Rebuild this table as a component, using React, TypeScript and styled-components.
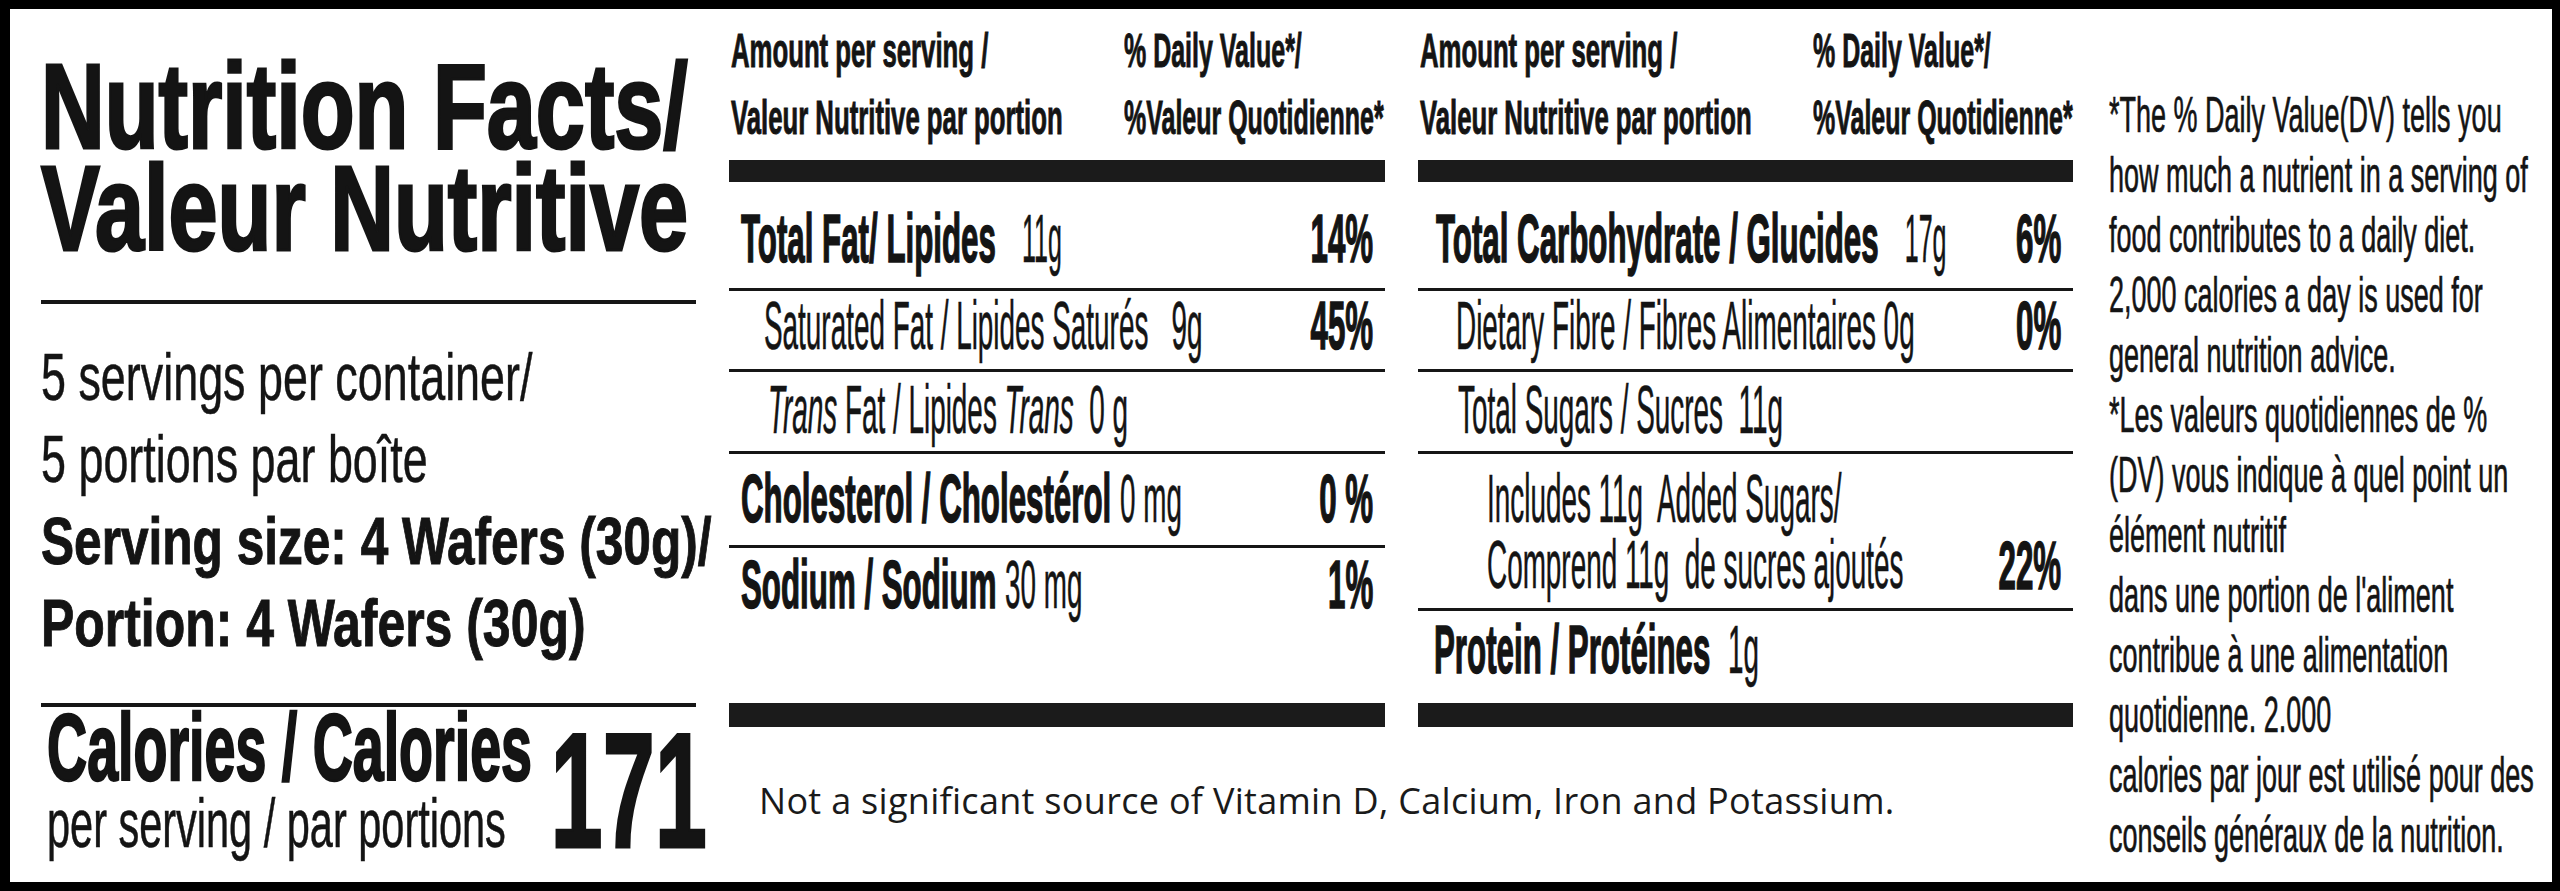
import React from "react";
import styled, { createGlobalStyle } from "styled-components";

const Global = createGlobalStyle`
  html, body { margin: 0; padding: 0; background: #fff; overflow: hidden; }
  #root { width: 2560px; height: 891px; }
`;

const Card = styled.div`
  box-sizing: border-box;
  width: 2560px;
  height: 891px;
  border-style: solid;
  border-color: #000;
  border-width: 9px 8px 9px 10px;
  background: #fff;
  display: flex;
  align-items: stretch;
  padding-left: 31px;
  overflow: hidden;
  color: #141414;
  font-family: "Liberation Sans", Arial, sans-serif;
`;

/* condensed text: glyphs squeezed horizontally */
const Sq = styled.span<{ $k: number; $right?: boolean; $w?: number }>`
  display: block;
  width: max-content;
  white-space: nowrap;
  transform: scaleX(${(p) => p.$k});
  transform-origin: ${(p) => (p.$right ? "right" : "left")} center;
  -webkit-text-stroke: ${(p) => p.$w ?? 0}px currentColor;
`;

const Amt = styled.span<{ $k?: number }>`
  display: inline-block;
  font-weight: 400;
  -webkit-text-stroke: 0.6px currentColor;
  transform: scaleX(${(p) => p.$k ?? 0.89});
  transform-origin: left center;
`;

/* ---------- left column ---------- */
const LeftCol = styled.div`
  flex: none;
  width: 664px;
  display: flex;
  flex-direction: column;
  padding-top: 46px;
`;

const Title = styled.h1`
  margin: 0;
  font-size: 120px;
  line-height: 102px;
  font-weight: 700;
`;

const TitleLine = styled.div`
  height: 102px;
`;

const Rule = styled.div<{ $mt: number }>`
  width: 655px;
  height: 4px;
  background: #161616;
  margin-top: ${(p) => p.$mt}px;
`;

const Info = styled.div`
  margin-top: 32px;
`;

const InfoLine = styled.div<{ $bold?: boolean }>`
  height: 82px;
  font-size: ${(p) => (p.$bold ? 67 : 66)}px;
  line-height: 82px;
  font-weight: ${(p) => (p.$bold ? 700 : 400)};
`;

const CalRow = styled.div`
  display: flex;
  align-items: flex-start;
  margin-top: -1px;
`;

const CalLabel = styled.div`
  flex: 1;
  min-width: 0;
  padding-left: 6px;
  display: flex;
  flex-direction: column;
`;

const CalTitle = styled.div`
  font-size: 95px;
  line-height: 82px;
  font-weight: 700;
`;

const CalSub = styled.div`
  font-size: 68px;
  line-height: 60px;
  margin-top: 5px;
`;

const CalNum = styled.div`
  flex: none;
  font-size: 163px;
  line-height: 163px;
  font-weight: 700;
  margin: 3px -2px 0 0;
`;

/* ---------- middle: two tables ---------- */
const Middle = styled.div`
  flex: none;
  width: 1344px;
  margin-left: 24px;
  display: flex;
  flex-direction: column;
`;

const Tables = styled.div`
  display: flex;
  gap: 33px;
  height: 718px;
`;

const Table = styled.section<{ $w: number }>`
  width: ${(p) => p.$w}px;
  display: flex;
  flex-direction: column;
`;

const Head = styled.div`
  display: grid;
  grid-template-columns: 393px 1fr;
  padding: 8px 0 0 2px;
  font-size: 49px;
  line-height: 67px;
  font-weight: 700;
`;

const HeadCell = styled.div`
  display: flex;
  flex-direction: column;
`;

const Bar = styled.div<{ $h: number; $auto?: boolean }>`
  height: ${(p) => p.$h}px;
  background: #1b1b1b;
  margin-top: ${(p) => (p.$auto ? "auto" : "9px")};
`;

const Row = styled.div<{ $h?: number; $pt: number; $in: number; $rule?: boolean }>`
  box-sizing: border-box;
  display: flex;
  align-items: flex-start;
  ${(p) => (p.$h ? `height: ${p.$h}px;` : "")}
  padding: ${(p) => p.$pt}px 12px 0 ${(p) => p.$in}px;
  border-bottom: ${(p) => (p.$rule ? "3px solid #161616" : "none")};
  font-size: 68px;
  line-height: 68px;
`;

const Label = styled.div<{ $lh?: number }>`
  flex: 1;
  min-width: 0;
  ${(p) => (p.$lh ? `line-height: ${p.$lh}px;` : "")}
`;

const Pct = styled.div<{ $mt?: number }>`
  flex: none;
  font-weight: 700;
  margin-top: ${(p) => p.$mt ?? 0}px;
`;

const Note = styled.p`
  margin: 50px 0 0;
  padding-left: 30px;
  font-family: "Open Sans", "Noto Sans", sans-serif;
  font-size: 36px;
  letter-spacing: 0.3px;
  line-height: 48px;
  color: #1a1a1a;
  white-space: nowrap;
`;

/* ---------- footnote column ---------- */
const Foot = styled.aside`
  flex: 1;
  min-width: 0;
  margin-left: 36px;
  padding-top: 76px;
  font-size: 50px;
  line-height: 60px;
`;

const FootLine = styled.div`
  height: 60px;
`;

const HB = 0.525;
const HR = 0.51;
const KB = 0.46;
const KR = 0.41;
const WB = 1.6;
const WR = 0.6;

const TableHead = () => (
  <Head>
    <HeadCell>
      <Sq $k={HB} $w={1}>Amount per serving /</Sq>
      <Sq $k={HB} $w={1}>Valeur Nutritive par portion</Sq>
    </HeadCell>
    <HeadCell>
      <Sq $k={HR} $w={1}>% Daily Value*/</Sq>
      <Sq $k={HR} $w={1}>%Valeur Quotidienne*</Sq>
    </HeadCell>
  </Head>
);

const footLines = [
  "*The % Daily Value(DV) tells you",
  "how much a nutrient in a serving of",
  "food contributes to a daily diet.",
  "2,000 calories a day is used for",
  "general nutrition advice.",
  "*Les valeurs quotidiennes de %",
  "(DV) vous indique à quel point un",
  "élément nutritif",
  "dans une portion de l'aliment",
  "contribue à une alimentation",
  "quotidienne. 2.000",
  "calories par jour est utilisé pour des",
  "conseils généraux de la nutrition.",
];

const NB = "\u00a0";

export default function App() {
  return (
    <>
      <Global />
      <Card>
        <LeftCol>
          <Title>
            <TitleLine>
              <Sq $k={0.735} $w={3}>Nutrition Facts/</Sq>
            </TitleLine>
            <TitleLine>
              <Sq $k={0.735} $w={3}>Valeur Nutritive</Sq>
            </TitleLine>
          </Title>
          <Rule $mt={41} />
          <Info>
            <InfoLine>
              <Sq $k={0.68} $w={0.5}>5 servings per container/</Sq>
            </InfoLine>
            <InfoLine>
              <Sq $k={0.68} $w={0.5}>5 portions par boîte</Sq>
            </InfoLine>
            <InfoLine $bold>
              <Sq $k={0.74} $w={1}>Serving size: 4 Wafers (30g)/</Sq>
            </InfoLine>
            <InfoLine $bold>
              <Sq $k={0.745} $w={1}>Portion: 4 Wafers (30g)</Sq>
            </InfoLine>
          </Info>
          <Rule $mt={39} />
          <CalRow>
            <CalLabel>
              <CalTitle>
                <Sq $k={0.585} $w={2.5}>Calories / Calories</Sq>
              </CalTitle>
              <CalSub>
                <Sq $k={0.61} $w={0.6}>per serving / par portions</Sq>
              </CalSub>
            </CalLabel>
            <CalNum>
              <Sq $k={0.575} $w={3} $right>171</Sq>
            </CalNum>
          </CalRow>
        </LeftCol>

        <Middle>
          <Tables>
            <Table $w={656}>
              <TableHead />
              <Bar $h={22} />
              <Row $h={109} $pt={22} $in={12} $rule>
                <Label>
                  <Sq $k={KB} $w={WB}>
                    <b>Total Fat/ Lipides</b>
                    {NB + NB + NB}
                    <Amt $k={0.8}>11g</Amt>
                  </Sq>
                </Label>
                <Pct>
                  <Sq $k={KB} $w={WB} $right>14%</Sq>
                </Pct>
              </Row>
              <Row $h={81} $pt={0} $in={35} $rule>
                <Label>
                  <Sq $k={KR} $w={WR}>
                    Saturated Fat / Lipides Saturés{NB + NB} 9g
                  </Sq>
                </Label>
                <Pct>
                  <Sq $k={KB} $w={WB} $right>45%</Sq>
                </Pct>
              </Row>
              <Row $h={82} $pt={3} $in={39} $rule>
                <Label>
                  <Sq $k={KR} $w={WR}>
                    <i>Trans</i> Fat / Lipides <i>Trans</i>{NB} 0 g
                  </Sq>
                </Label>
              </Row>
              <Row $h={94} $pt={10} $in={12} $rule>
                <Label>
                  <Sq $k={KB} $w={WB}>
                    <b>Cholesterol / Cholestérol</b> <Amt>0 mg</Amt>
                  </Sq>
                </Label>
                <Pct>
                  <Sq $k={KB} $w={WB} $right>0 %</Sq>
                </Pct>
              </Row>
              <Row $pt={2} $in={12}>
                <Label>
                  <Sq $k={KB} $w={WB}>
                    <b>Sodium / Sodium</b>
                    {NB}
                    <Amt>30 mg</Amt>
                  </Sq>
                </Label>
                <Pct>
                  <Sq $k={KB} $w={WB} $right>1%</Sq>
                </Pct>
              </Row>
              <Bar $h={24} $auto />
            </Table>

            <Table $w={655}>
              <TableHead />
              <Bar $h={22} />
              <Row $h={109} $pt={22} $in={18} $rule>
                <Label>
                  <Sq $k={KB} $w={WB}>
                    <b>Total Carbohydrate / Glucides</b>
                    {NB + NB + NB}
                    <Amt $k={0.8}>17g</Amt>
                  </Sq>
                </Label>
                <Pct>
                  <Sq $k={KB} $w={WB} $right>6%</Sq>
                </Pct>
              </Row>
              <Row $h={81} $pt={0} $in={38} $rule>
                <Label>
                  <Sq $k={KR} $w={WR}>Dietary Fibre / Fibres Alimentaires 0g</Sq>
                </Label>
                <Pct>
                  <Sq $k={KB} $w={WB} $right>0%</Sq>
                </Pct>
              </Row>
              <Row $h={82} $pt={3} $in={40} $rule>
                <Label>
                  <Sq $k={KR} $w={WR}>Total Sugars / Sucres{NB} 11g</Sq>
                </Label>
              </Row>
              <Row $h={157} $pt={11} $in={69} $rule>
                <Label $lh={66}>
                  <Sq $k={KR} $w={WR}>Includes 11g{NB} Added Sugars/</Sq>
                  <Sq $k={KR} $w={WR}>Comprend 11g{NB} de sucres ajoutés</Sq>
                </Label>
                <Pct $mt={66}>
                  <Sq $k={KB} $w={WB} $right>22%</Sq>
                </Pct>
              </Row>
              <Row $pt={4} $in={16}>
                <Label>
                  <Sq $k={KB} $w={WB}>
                    <b>Protein / Protéines</b>
                    {NB + NB}
                    <Amt>1g</Amt>
                  </Sq>
                </Label>
              </Row>
              <Bar $h={24} $auto />
            </Table>
          </Tables>
          <Note>
            Not a significant source of Vitamin D, Calcium, Iron and Potassium.
          </Note>
        </Middle>

        <Foot>
          {footLines.map((l) => (
            <FootLine key={l}>
              <Sq $k={0.54} $w={0.7}>{l}</Sq>
            </FootLine>
          ))}
        </Foot>
      </Card>
    </>
  );
}
